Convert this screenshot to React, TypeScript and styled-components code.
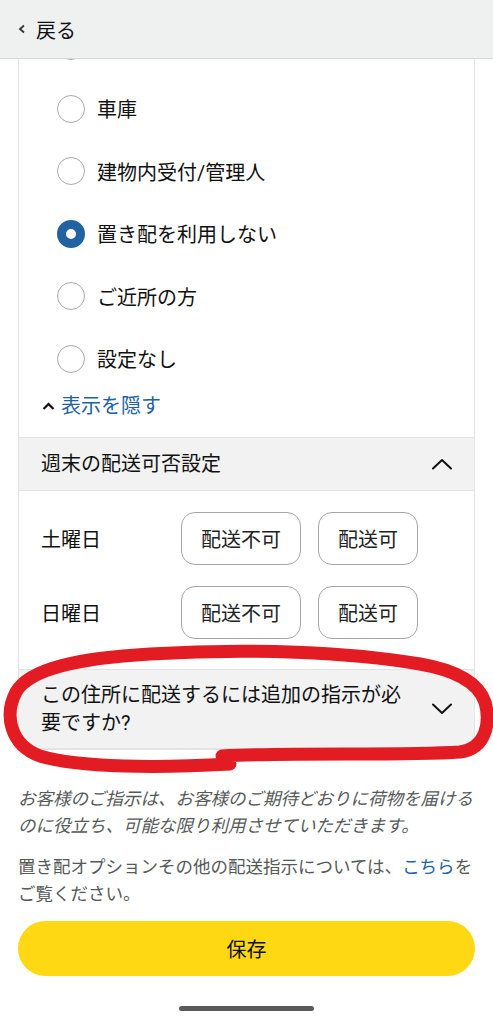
import React, { useState } from 'react';
import styled, { createGlobalStyle } from 'styled-components';

const GlobalStyle = createGlobalStyle`
  html, body {
    margin: 0;
    padding: 0;
    background: #fff;
  }
  body {
    font-family: Roboto, "Noto Sans CJK JP", "Noto Sans", sans-serif;
    color: #0f1111;
  }
`;

// Delivery place options (the first one is scrolled up under the top bar)
const placeOptions: string[] = [
  '',
  '車庫',
  '建物内受付/管理人',
  '置き配を利用しない',
  'ご近所の方',
  '設定なし',
];

const weekendDays: string[] = ['土曜日', '日曜日'];

const Page = styled.div`
  position: relative;
  width: 493px;
  height: 1024px;
  display: flex;
  flex-direction: column;
  overflow: hidden;
`;

const TopBar = styled.header`
  height: 58px;
  flex-shrink: 0;
  display: flex;
  align-items: center;
  gap: 10px;
  padding-left: 18px;
  background: #eff0f0;
  border-bottom: 1px solid #d5d9d9;
  position: relative;
  z-index: 1;
  font-size: 20px;
  color: #111;
`;

const Scroll = styled.main`
  flex: 1;
  overflow: hidden;
  display: flex;
  flex-direction: column;
`;

const Card = styled.section`
  margin: -44px 18px 0;
  border-left: 1px solid #e3e3e3;
  border-right: 1px solid #e3e3e3;
  border-bottom: 1px solid #e3e3e3;
`;

const RadioList = styled.div`
  display: flex;
  flex-direction: column;
  margin-bottom: -1px;
`;

const RadioRow = styled.label`
  height: 62.5px;
  display: flex;
  align-items: center;
  gap: 12px;
  padding-left: 38px;
  font-size: 20px;
  color: #111;
`;

const RadioCircle = styled.span<{ checked: boolean }>`
  width: 28px;
  height: 28px;
  box-sizing: border-box;
  border-radius: 50%;
  flex-shrink: 0;
  border: ${({ checked }) => (checked ? '9px solid #2162a1' : '1.5px solid #a9a9a9')};
  background: #fff;
`;

const ToggleLink = styled.div`
  height: 48px;
  box-sizing: border-box;
  padding: 5px 0 19px 23px;
  display: flex;
  align-items: center;
  gap: 6px;
  font-size: 20px;
  line-height: 24px;
  color: #2162a1;
`;

const SectionHeader = styled.div<{ tall?: boolean }>`
  display: flex;
  align-items: center;
  justify-content: space-between;
  box-sizing: border-box;
  min-height: 54px;
  padding: ${({ tall }) => (tall ? '11px 21px 11px 22px' : '0 21px 0 22px')};
  background: #f2f2f2;
  border-top: 1px solid #e3e3e3;
  border-bottom: 1px solid #e3e3e3;
  font-size: 20px;
  line-height: 28px;
  color: #111;
`;

const HeaderText = styled.span`
  max-width: 372px;
`;

const DayList = styled.div`
  display: flex;
  flex-direction: column;
  gap: 21px;
  padding: 21px 0 30px 22px;
`;

const DayRow = styled.div`
  display: flex;
  align-items: center;
`;

const DayLabel = styled.span`
  width: 140px;
  font-size: 20px;
  color: #111;
`;

const ChoiceGroup = styled.div`
  display: flex;
  gap: 17px;
`;

const ChoiceButton = styled.button`
  height: 53px;
  padding: 0 19px;
  border: 1px solid #a6a6a6;
  border-radius: 14px;
  background: #fff;
  font-family: inherit;
  font-size: 20px;
  color: #222;
`;

const Notes = styled.div`
  margin-top: 36px;
  padding: 0 18px;
  display: flex;
  flex-direction: column;
  gap: 14px;
  font-size: 17.5px;
  line-height: 27px;
  color: #565959;
`;

const Note = styled.p<{ italic?: boolean }>`
  margin: 0;
  font-style: ${({ italic }) => (italic ? 'italic' : 'normal')};
`;

const Link = styled.a`
  color: #2162a1;
  text-decoration: none;
`;

const SaveButton = styled.button`
  margin: 13px 18px 0;
  height: 55px;
  border: none;
  border-radius: 28px;
  background: #ffd814;
  font-family: inherit;
  font-size: 20px;
  color: #111;
`;

const HomeBar = styled.div`
  align-self: center;
  margin-top: 30px;
  width: 135px;
  height: 5px;
  border-radius: 3px;
  background: #5a5a5a;
`;

const Scribble = styled.svg`
  position: absolute;
  left: 0;
  top: 0;
  pointer-events: none;
`;

const Chevron: React.FC<{ up?: boolean }> = ({ up }) => (
  <svg width="22" height="12" viewBox="0 0 22 12">
    <polyline
      points={up ? '2,10.5 11,2 20,10.5' : '2,1.5 11,10 20,1.5'}
      fill="none"
      stroke="#111"
      strokeWidth="2"
      strokeLinecap="round"
      strokeLinejoin="round"
    />
  </svg>
);

const App: React.FC = () => {
  const [selected, setSelected] = useState(3);

  return (
    <Page>
      <GlobalStyle />
      <TopBar>
        <svg width="8" height="10" viewBox="0 0 8 10">
          <polyline points="6,1.5 2,5 6,8.5" fill="none" stroke="#333" strokeWidth="1.8" />
        </svg>
        戻る
      </TopBar>
      <Scroll>
        <Card>
          <RadioList>
            {placeOptions.map((label, i) => (
              <RadioRow key={i} onClick={() => setSelected(i)}>
                <RadioCircle checked={selected === i} />
                {label}
              </RadioRow>
            ))}
          </RadioList>
          <ToggleLink>
            <svg width="13" height="8" viewBox="0 0 13 8">
              <polyline points="1.5,7 6.5,2 11.5,7" fill="none" stroke="#111" strokeWidth="2.2" />
            </svg>
            表示を隠す
          </ToggleLink>
          <SectionHeader>
            週末の配送可否設定
            <Chevron up />
          </SectionHeader>
          <DayList>
            {weekendDays.map((day) => (
              <DayRow key={day}>
                <DayLabel>{day}</DayLabel>
                <ChoiceGroup>
                  <ChoiceButton>配送不可</ChoiceButton>
                  <ChoiceButton>配送可</ChoiceButton>
                </ChoiceGroup>
              </DayRow>
            ))}
          </DayList>
          <SectionHeader tall>
            <HeaderText>この住所に配送するには追加の指示が必要ですか?</HeaderText>
            <Chevron />
          </SectionHeader>
        </Card>
        <Notes>
          <Note italic>
            お客様のご指示は、お客様のご期待どおりに荷物を届けるのに役立ち、可能な限り利用させていただきます。
          </Note>
          <Note>
            置き配オプションその他の配送指示については、<Link>こちら</Link>をご覧ください。
          </Note>
        </Notes>
        <SaveButton>保存</SaveButton>
        <HomeBar />
      </Scroll>
      <Scribble width="493" height="1024" viewBox="0 0 493 1024">
        <path
          d="M 222 756 C 300 752, 400 756, 460 752 C 488 748, 490 720, 485 702 C 478 682, 455 670, 420 664 C 350 652, 250 648, 150 654 C 80 658, 30 668, 16 692 C 4 715, 10 745, 40 756 C 80 768, 160 768, 230 764"
          fill="none"
          stroke="#e31b23"
          strokeWidth="13"
          strokeLinecap="round"
          strokeLinejoin="round"
        />
      </Scribble>
    </Page>
  );
};

export default App;
